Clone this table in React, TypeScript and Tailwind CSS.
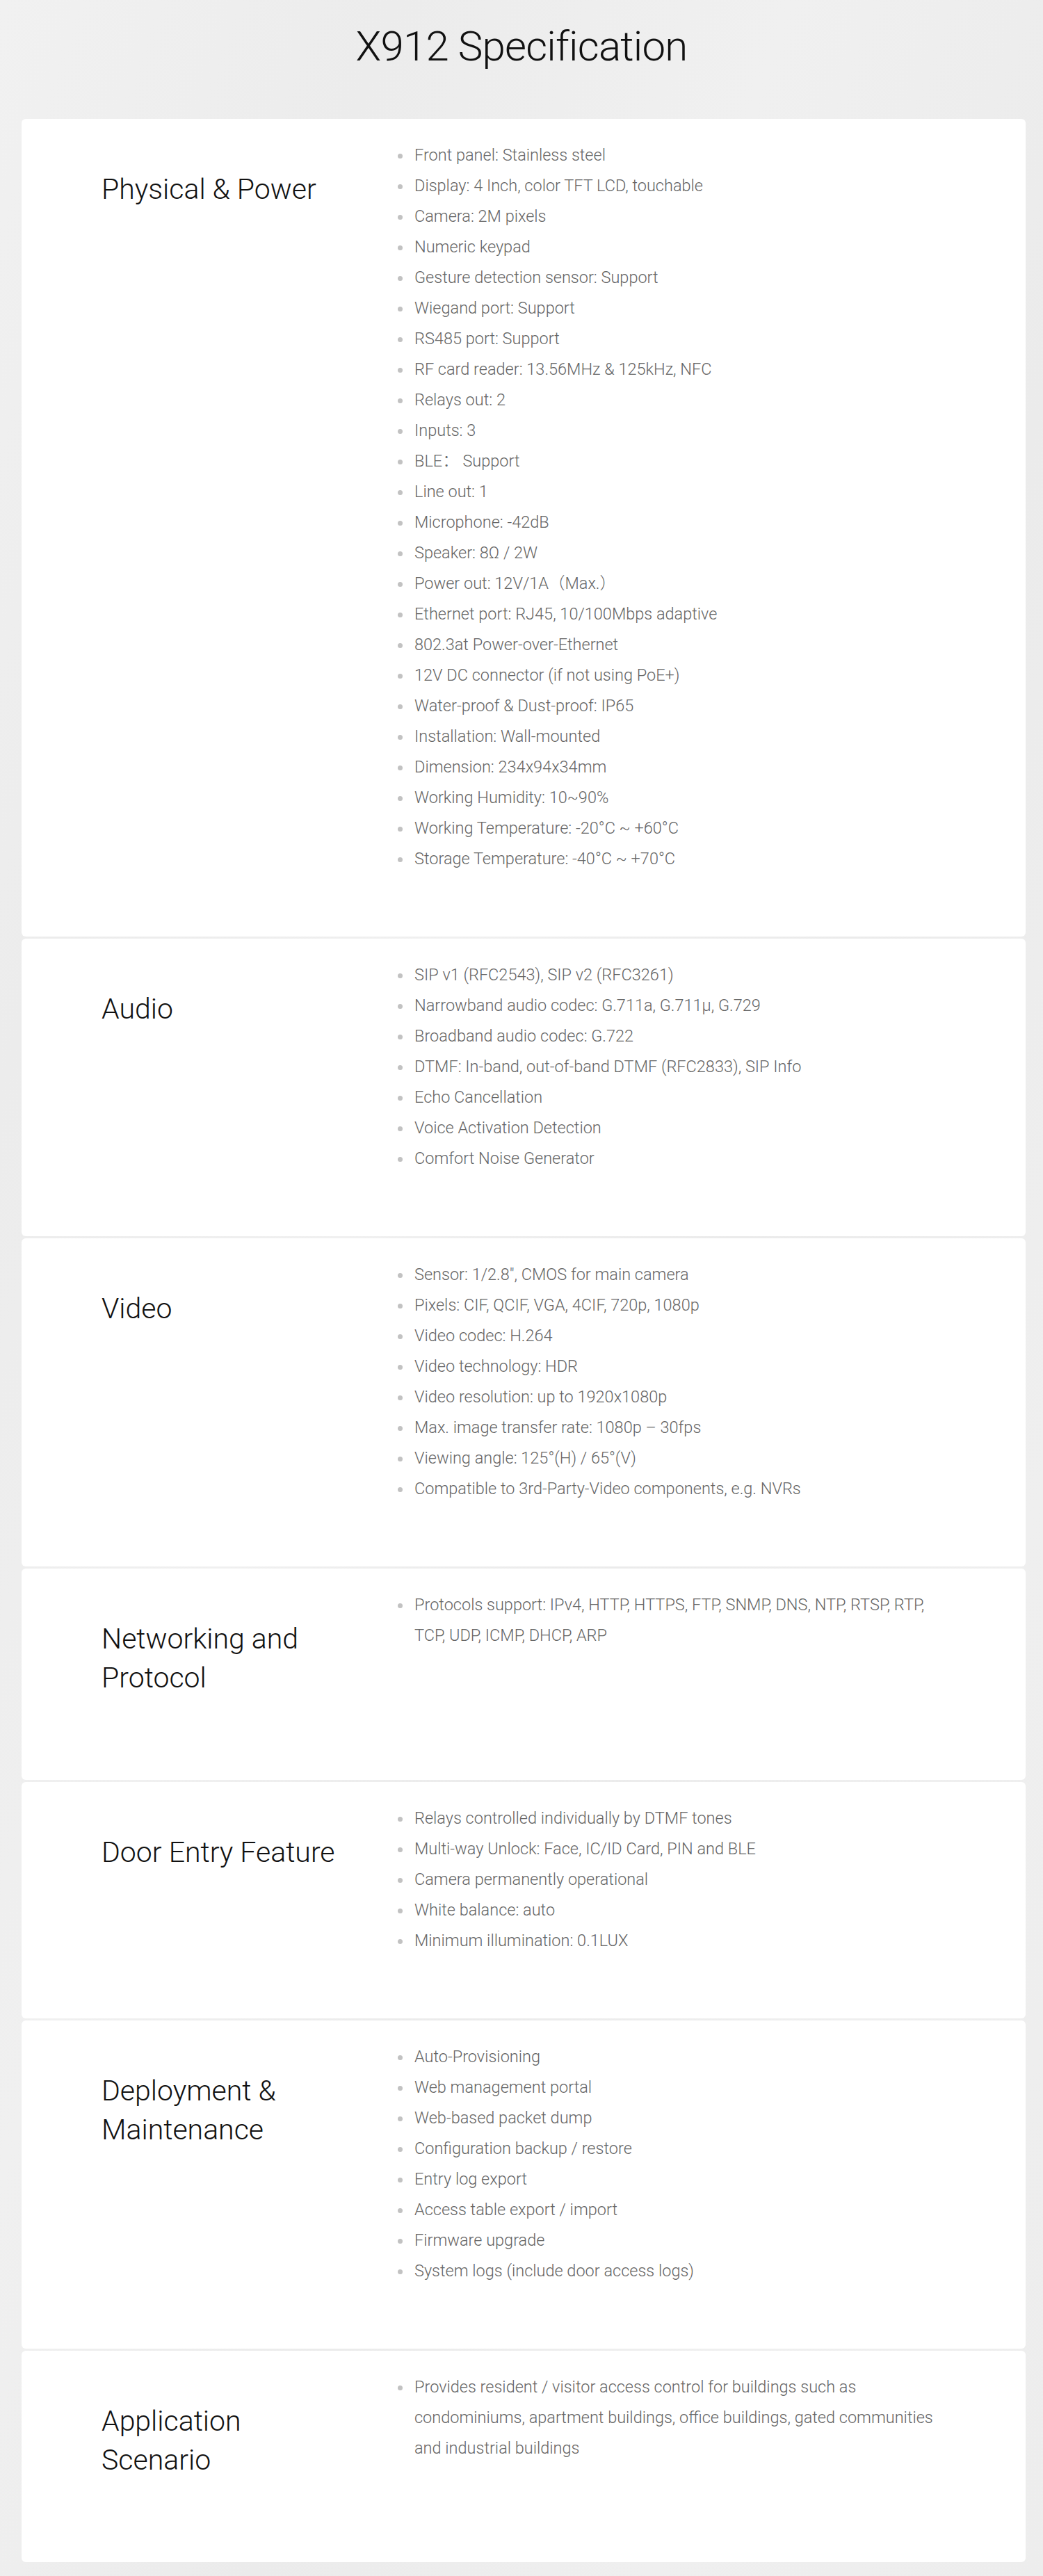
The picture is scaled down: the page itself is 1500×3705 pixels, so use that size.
import React from "react";

type Section = { title: string[]; items: string[] };

const sections: Section[] = [
  {
    title: ["Physical & Power"],
    items: [
      "Front panel: Stainless steel",
      "Display: 4 Inch, color TFT LCD, touchable",
      "Camera: 2M pixels",
      "Numeric keypad",
      "Gesture detection sensor: Support",
      "Wiegand port: Support",
      "RS485 port: Support",
      "RF card reader: 13.56MHz & 125kHz, NFC",
      "Relays out: 2",
      "Inputs: 3",
      "BLE\uFF1A Support",
      "Line out: 1",
      "Microphone: -42dB",
      "Speaker: 8\u03A9 / 2W",
      "Power out: 12V/1A\uFF08Max.\uFF09",
      "Ethernet port: RJ45, 10/100Mbps adaptive",
      "802.3at Power-over-Ethernet",
      "12V DC connector (if not using PoE+)",
      "Water-proof & Dust-proof: IP65",
      "Installation: Wall-mounted",
      "Dimension: 234x94x34mm",
      "Working Humidity: 10~90%",
      "Working Temperature: -20°C ~ +60°C",
      "Storage Temperature: -40°C ~ +70°C",
    ],
  },
  {
    title: ["Audio"],
    items: [
      "SIP v1 (RFC2543), SIP v2 (RFC3261)",
      "Narrowband audio codec: G.711a, G.711\u03BC, G.729",
      "Broadband audio codec: G.722",
      "DTMF: In-band, out-of-band DTMF (RFC2833), SIP Info",
      "Echo Cancellation",
      "Voice Activation Detection",
      "Comfort Noise Generator",
    ],
  },
  {
    title: ["Video"],
    items: [
      "Sensor: 1/2.8\", CMOS for main camera",
      "Pixels: CIF, QCIF, VGA, 4CIF, 720p, 1080p",
      "Video codec: H.264",
      "Video technology: HDR",
      "Video resolution: up to 1920x1080p",
      "Max. image transfer rate: 1080p – 30fps",
      "Viewing angle: 125°(H) / 65°(V)",
      "Compatible to 3rd-Party-Video components, e.g. NVRs",
    ],
  },
  {
    title: ["Networking and", "Protocol"],
    items: [
      "Protocols support: IPv4, HTTP, HTTPS, FTP, SNMP, DNS, NTP, RTSP, RTP, TCP, UDP, ICMP, DHCP, ARP",
    ],
  },
  {
    title: ["Door Entry Feature"],
    items: [
      "Relays controlled individually by DTMF tones",
      "Multi-way Unlock: Face, IC/ID Card, PIN and BLE",
      "Camera permanently operational",
      "White balance: auto",
      "Minimum illumination: 0.1LUX",
    ],
  },
  {
    title: ["Deployment &", "Maintenance"],
    items: [
      "Auto-Provisioning",
      "Web management portal",
      "Web-based packet dump",
      "Configuration backup / restore",
      "Entry log export",
      "Access table export / import",
      "Firmware upgrade",
      "System logs (include door access logs)",
    ],
  },
  {
    title: ["Application", "Scenario"],
    items: [
      "Provides resident / visitor access control for buildings such as condominiums, apartment buildings, office buildings, gated communities and industrial buildings",
    ],
  },
];

function Card({ section }: { section: Section }) {
  return (
    <div className="flex items-start rounded-[6px] bg-white pl-[115px]">
      <div className="w-[426px] shrink-0 pt-[73px] pb-[119px]">
        <h2 className="text-[41px] font-light leading-[56px] text-[#111111]">
          {section.title.map((t, i) => (
            <React.Fragment key={i}>
              {i > 0 && <br />}
              {t}
            </React.Fragment>
          ))}
        </h2>
      </div>
      <ul className="w-[786px] pt-[30px] pb-[90px]">
        {section.items.map((item, i) => (
          <li key={i} className="flex items-start text-[23.5px] font-light leading-[44px] text-[#666666]">
            <span className="flex h-[44px] w-[24px] shrink-0 items-center pt-[3px]">
              <span className="block h-[7px] w-[7px] rounded-full bg-[#c2c2c2]" />
            </span>
            <span className="w-[762px]">{item}</span>
          </li>
        ))}
      </ul>
    </div>
  );
}

export default function App() {
  return (
    <div
      className="min-h-[3705px] w-full bg-[#eeeeee] bg-[linear-gradient(110deg,#f1f1f1_0%,#ececec_20%,#f0f0f0_40%,#ebebeb_60%,#efefef_80%,#ededed_100%)] pb-[20px]"
      style={{ fontFamily: "Roboto, 'Noto Sans', 'Liberation Sans', 'Noto Sans CJK SC', sans-serif" }}
    >
      <div className="flex h-[171px] justify-center pt-[37px]">
        <h1 className="text-[60px] font-light leading-[60px] tracking-[-0.8px] text-[#111111]">X912 Specification</h1>
      </div>
      <div className="ml-[31px] flex w-[1444px] flex-col gap-[3px]">
        {sections.map((s, i) => (
          <Card key={i} section={s} />
        ))}
      </div>
    </div>
  );
}
